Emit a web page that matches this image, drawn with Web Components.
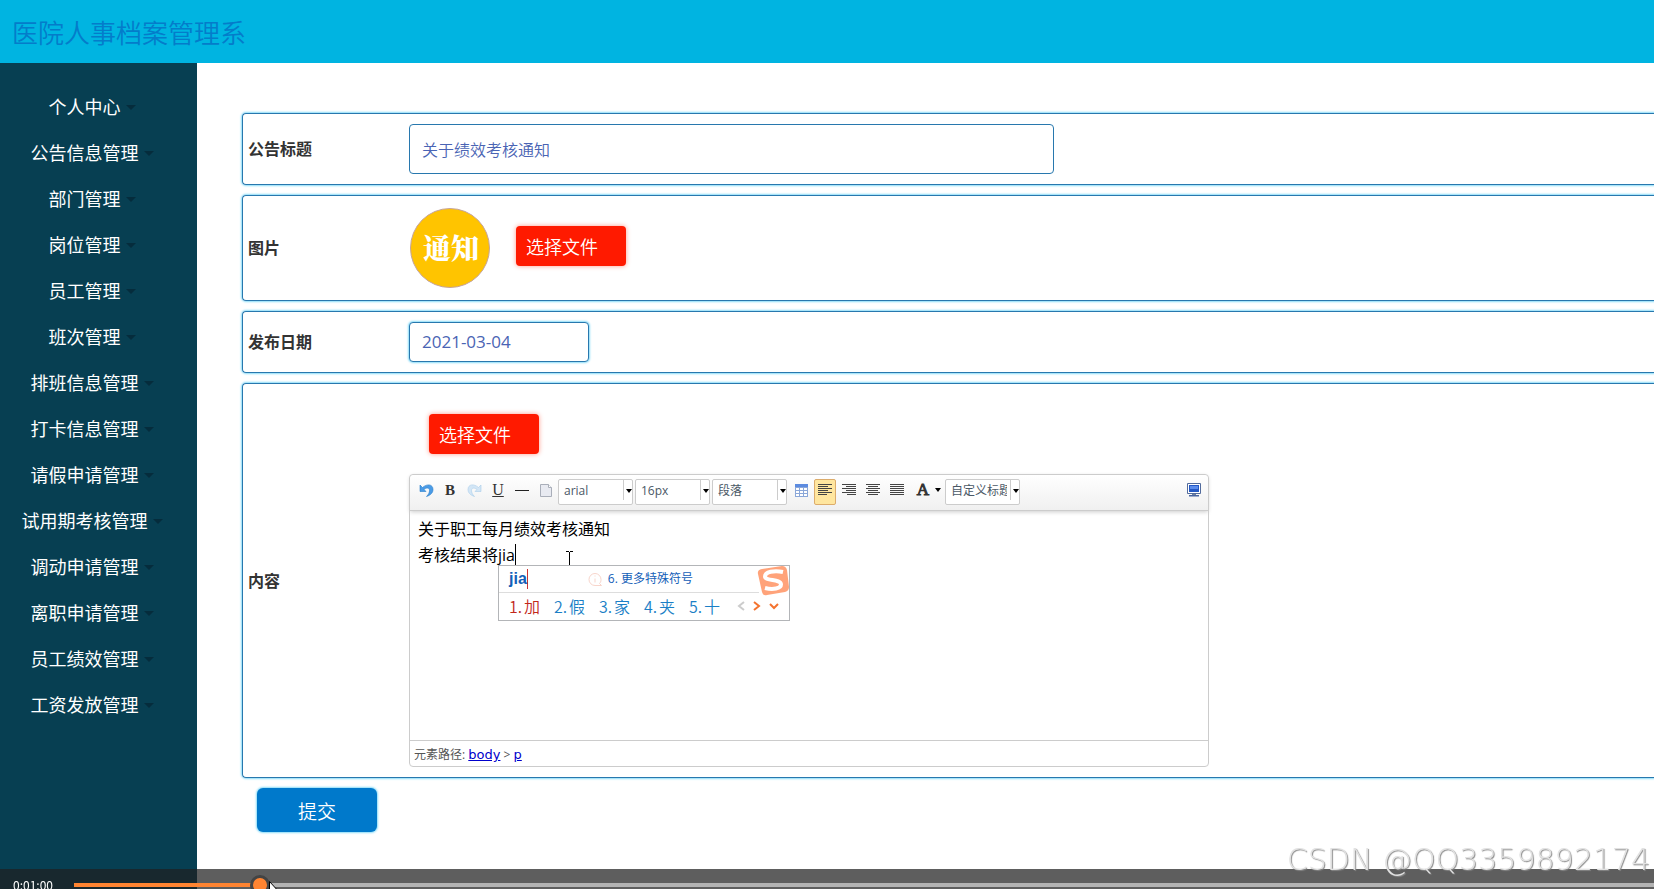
<!DOCTYPE html>
<html lang="zh-CN">
<head>
<meta charset="utf-8">
<title>医院人事档案管理系统</title>
<style>
html,body{margin:0;background:#fff;color:#333;font:16px/24px "Open Sans","Noto Sans CJK SC",sans-serif}
body{overflow:hidden}
</style>
</head>
<body>
<hr-app></hr-app>
<script>
function define(name, html, setup) {
  const template = document.createElement('template');
  template.innerHTML = html;
  customElements.define(name, class extends HTMLElement {
    constructor() {
      super();
      this.attachShadow({mode: 'open'}).append(template.content.cloneNode(true));
    }
    connectedCallback() { if (setup) setup(this, this.shadowRoot); }
  });
}

define('app-header', `
<style>
:host{display:flex;align-items:center;height:63px;padding:0 12px;background:#00b4e1}
h1{margin:0;font:350 26px/40px "Noto Sans CJK SC",sans-serif;color:#047cca}
</style>
<h1><slot></slot></h1>`);

define('menu-item', `
<style>
:host{display:block}
button{display:flex;align-items:center;justify-content:center;gap:5px;width:100%;height:46px;padding:0;border:0;background:none;color:#fff;font:inherit;font-size:18px;cursor:pointer}
i{border:5px solid transparent;border-top-color:#052c3c;border-bottom:0}
</style>
<button type="button"><span><slot></slot></span><i></i></button>`);

define('side-menu', `
<style>
:host{display:block;flex:none;box-sizing:border-box;width:197px;padding:21px 13px 21px 0;background:#073f52}
nav{display:flex;flex-direction:column}
</style>
<nav>
<menu-item>个人中心</menu-item><menu-item>公告信息管理</menu-item><menu-item>部门管理</menu-item>
<menu-item>岗位管理</menu-item><menu-item>员工管理</menu-item><menu-item>班次管理</menu-item>
<menu-item>排班信息管理</menu-item><menu-item>打卡信息管理</menu-item><menu-item>请假申请管理</menu-item>
<menu-item>试用期考核管理</menu-item><menu-item>调动申请管理</menu-item><menu-item>离职申请管理</menu-item>
<menu-item>员工绩效管理</menu-item><menu-item>工资发放管理</menu-item>
</nav>`);

define('form-row', `
<style>
:host{display:flex;align-items:center;padding:10px 0 10px 5px;border:1px solid #2878ae;border-right:0;border-radius:4px 0 0 4px;box-shadow:0 0 2px 1px #8adcf8}
.name{flex:none;width:161px;font-weight:bold;color:#333}
.field{flex:1;min-width:0}
</style>
<div class="name"><slot name="name"></slot></div>
<div class="field"><slot></slot></div>`);

define('text-field', `
<style>
:host{display:block}
input{display:block;box-sizing:border-box;width:100%;height:50px;padding:0 12px;border:1px solid #2878ae;border-radius:4px;background:#fff;color:#4a64b4;font:350 16px "Noto Sans CJK SC",sans-serif;outline:0}
:host([compact]) input{height:40px;padding-bottom:2px;font:17px "Open Sans",sans-serif;box-shadow:0 0 2px 1px #8adcf8}
</style>
<input type="text">`, (host, root) => {
  const input = root.querySelector('input');
  input.value = host.getAttribute('value');
  input.setAttribute('aria-label', host.getAttribute('label'));
});

define('file-button', `
<style>
:host{display:block}
button{display:block;width:110px;height:40px;padding:0 10px;border:0;border-radius:4px;background:#ff1a00;box-shadow:0 0 5px #ff9a8c;color:#fff;font:350 18px/24px "Noto Sans CJK SC",sans-serif;text-align:left;cursor:pointer}
</style>
<button type="button">选择文件</button>`);

define('notice-picture', `
<style>:host{display:block;width:80px;height:80px}svg{display:block}text{font:900 28px "Noto Serif CJK SC","Noto Sans CJK SC",serif}</style>
<svg width="80" height="80" viewBox="0 0 80 80"><circle cx="40" cy="40" r="39.5" fill="#ffc400" stroke="#c5a49c"/><text x="41" y="51" text-anchor="middle" fill="#fff">通知</text></svg>`);

define('combo-box', `
<style>
:host{display:block;position:relative;width:75px;height:26px}
select{appearance:none;display:block;box-sizing:border-box;width:100%;height:100%;padding:0 12px 3px 5px;border:1px solid #ccc;border-radius:2px;background:linear-gradient(#ccc,#ccc) 64px 0/1px 20px no-repeat #fff;color:#4a5866;font:12px "Open Sans","Noto Sans CJK SC",sans-serif;text-overflow:clip;overflow:hidden}
i{position:absolute;right:1px;top:10px;border:3px solid transparent;border-top:4px solid #000;border-bottom:0;pointer-events:none}
</style>
<select><option></option></select><i></i>`, (host, root) => {
  root.querySelector('option').textContent = host.getAttribute('value');
  root.querySelector('select').setAttribute('aria-label', host.getAttribute('label'));
});

const lines = (rows) => '<path d="' + rows.map(([a, b], n) => `M${a} ${1.5 + n * 2}H${b}`).join('') + '" stroke="#444" fill="none"/>';
const ICONS = {
  undo: '<path d="M1 2v6.500h6L5 6.500C7.500 4.500 10.500 4.500 10.500 7.500c0 2-1 4-3 6C12 12 14 9.500 14 6.500 14 1 8 .500 3.500 4.500Z" fill="#4a9be6" stroke="#277cc9" stroke-width=".6"/>',
  redo: '<path d="M14 2v6.500H8L10 6.500C7.500 4.500 4.500 4.500 4.500 7.500c0 2 1 4 3 6C3 12 1 9.500 1 6.500 1 1 7 .500 11.500 4.500Z" fill="#d3e6f6" stroke="#a9cdea" stroke-width=".6"/>',
  line: '<path d="M0 7.500h14" stroke="#222"/>',
  page: '<path d="M1.500 1.500h8l3 3v9h-11Z" fill="#e8eaf1" stroke="#a9aeb9"/><path d="M9.500 1.500v3h3" fill="#fff" stroke="#a9aeb9"/>',
  table: '<path d="M1 2h13v12H1z" fill="#8ba7d8"/><path d="M1 1h13v3H1z" fill="#5c8be0"/><path d="M2 5h3v2H2zm4 0h3v2H6zm4 0h3v2h-3zM2 8h3v2H2zm4 0h3v2H6zm4 0h3v2h-3zM2 11h3v2H2zm4 0h3v2H6zm4 0h3v2h-3z" fill="#fff"/>',
  left: lines([[0, 14], [0, 10], [0, 14], [0, 10], [0, 14], [0, 9]]),
  right: lines([[0, 14], [4, 14], [0, 14], [4, 14], [0, 14], [5, 14]]),
  center: lines([[0, 14], [2, 12], [0, 14], [2, 12], [0, 14], [2, 12]]),
  justify: lines([[0, 14], [0, 14], [0, 14], [0, 14], [0, 14], [0, 14]]),
  screen: '<path d="M1.500.500h13v10H1.500z" fill="#fff" stroke="#526b9c"/><path d="M3 2h10v7H3z" fill="#2458c4"/><path d="M4 3h8v3H4z" fill="#5b8cec"/><path d="M6 11h4v1H6z" fill="#6d7fa2"/><path d="M3 12h10v1.500H3z" fill="#4865a0"/>'
};

define('tool-button', `
<style>
:host{display:block}
button{display:flex;align-items:center;justify-content:center;gap:6px;box-sizing:border-box;width:24px;height:26px;padding:0 0 4px;border:0;background:none;color:#333;font:bold 15px/20px "Liberation Serif",serif;cursor:pointer}
:host([active]) button{width:22px;margin:0 1px;border:1px solid #dcac6c;background:#ffe69f;border-radius:2px}
:host([wide]) button{width:32px;font-size:17px;font-weight:normal;-webkit-text-stroke:1px #333}
:host([underline]) button{text-decoration:underline;font-weight:normal;font-size:16px}
i{display:none;border:3px solid transparent;border-top:4px solid #000;border-bottom:0}
:host([wide]) i{display:block}
svg{display:block}
</style>
<button type="button"><slot></slot><i></i></button>`, (host, root) => {
  const button = root.querySelector('button');
  button.setAttribute('aria-label', host.getAttribute('label'));
  const icon = ICONS[host.getAttribute('icon')];
  if (icon) button.innerHTML = '<svg width="15" height="15" viewBox="0 0 15 15">' + icon + '</svg>';
});

define('input-candidates', `
<style>
:host{display:block;box-sizing:border-box;width:292px;border:1px solid #b3b5b8;background:#fff;color:#1b7fc6}
.top{display:flex;align-items:center;height:26px;padding-left:10px;border-bottom:1px solid #ddd;margin-right:30px}
b{font:bold 16px/20px "Liberation Sans",sans-serif;color:#1460b8;border-right:1px solid #c33}
.more{display:flex;align-items:center;gap:5px;margin-left:60px;font-size:12px;line-height:18px;color:#1460b8;white-space:nowrap}
.list{display:flex;align-items:center;height:27px;padding:0 0 2px 10px;box-sizing:border-box}
.list span{display:flex;gap:2px;width:45px;font:350 16px/24px "Noto Sans CJK SC",sans-serif}
.list span:first-child{color:#c22719}
em{font-style:normal}
svg{display:block;flex:none}
.logo{position:absolute;right:0;top:-1px}
</style>
<div class="top"><b>jia</b><div class="more"><svg width="15" height="15" viewBox="0 0 15 15" fill="none" stroke="#f8d5cb"><path d="M13.500 13.500H7a6 6 0 1 1 6-6c0 2-.5 3-1.500 4ZM7 6.500v4M7 3.500v1"/></svg><span>6. 更多特殊符号</span></div></div>
<div class="list"><span>1.<em>加</em></span><span>2.<em>假</em></span><span>3.<em>家</em></span><span>4.<em>夹</em></span><span>5.<em>十</em></span>
<svg width="46" height="12" viewBox="0 0 46 12" fill="none" stroke-width="2"><path d="M10 2 5 6l5 4" stroke="#ccc"/><path d="m20 2 5 4-5 4" stroke="#f4732f"/><path d="m36 4 4 4 4-4" stroke="#f4732f"/></svg></div>
<svg class="logo" width="32" height="32" viewBox="0 0 32 32"><path d="M5 4 25 1q4 0 5 4l2 17q0 4-4 5L10 30q-4 1-5-3L1 9q-1-4 4-5Z" fill="#ffa37a"/><path d="M26 7C17 5 8 7 8 11.500c0 5 16 2 16 8 0 4-8 5.500-16 3.500" fill="none" stroke="#fff" stroke-width="4"/></svg>`);

define('rich-editor', `
<style>
:host{display:flex;flex-direction:column;position:relative;box-sizing:border-box;width:100%;max-width:800px;height:293px;border:1px solid #ccc;border-radius:4px;background:#fff}
.bar{display:flex;flex:none;box-sizing:border-box;height:36px;padding:4px 3px 0 4px;border-bottom:1px solid #ccc;border-radius:4px 4px 0 0;background:linear-gradient(#fff,#f0f0f0);box-shadow:0 1px 4px #ccc}
.combos{display:flex;gap:2px;margin-right:2px}
.aligns{display:flex;margin-right:4px}
.fill{flex:1}
.body{flex:1;padding:5px 8px;color:#000;font-family:"Open Sans","Noto Sans CJK SC",sans-serif;line-height:26px;outline:0}
.body p{margin:0}
.body p:last-child span{border-right:1px solid #000}
.path{flex:none;height:25px;padding:0 4px;border-top:1px solid #ccc;font-size:12px;line-height:27px;color:#555}
a{font:13px/20px "DejaVu Sans",sans-serif;color:#00c}
input-candidates{position:absolute;left:88px;top:90px}
.beam{position:absolute;left:155px;top:76px}
</style>
<div class="bar" role="toolbar" aria-label="编辑工具">
<tool-button icon="undo" label="撤销"></tool-button><tool-button label="加粗">B</tool-button><tool-button icon="redo" label="重做"></tool-button><tool-button underline label="下划线">U</tool-button><tool-button icon="line" label="分隔线"></tool-button><tool-button icon="page" label="清空文档"></tool-button>
<div class="combos"><combo-box value="arial" label="字体"></combo-box><combo-box value="16px" label="字号"></combo-box><combo-box value="段落" label="段落格式"></combo-box></div>
<tool-button icon="table" label="插入表格"></tool-button><div class="aligns"><tool-button active icon="left" label="居左对齐"></tool-button><tool-button icon="right" label="居右对齐"></tool-button><tool-button icon="center" label="居中对齐"></tool-button><tool-button icon="justify" label="两端对齐"></tool-button></div><tool-button wide label="字体颜色">A</tool-button>
<combo-box value="自定义标题" label="自定义标题"></combo-box><div class="fill"></div><tool-button icon="screen" label="全屏"></tool-button>
</div>
<div class="body" contenteditable="true" role="textbox" aria-label="内容"><p>关于职工每月绩效考核通知</p><p><span>考核结果将jia</span></p></div>
<div class="path">元素路径: <a href="#body">body</a> &gt; <a href="#p">p</a></div>
<svg class="beam" width="9" height="17" viewBox="0 0 9 17" fill="none" stroke="#000"><path d="M1 .500h3M5 .500h3M1 16.500h3M5 16.500h3M4.500 1v15"/></svg>
<input-candidates></input-candidates>`);

define('notice-form', `
<style>
:host{display:block;flex:1;min-width:0;padding:50px 0 56px 45px}
form{display:flex;flex-direction:column;gap:10px}
.wide{width:100%;max-width:645px}
.date{width:180px}
.picture{display:flex;align-items:center;gap:26px;padding:2px 0 2px 1px}
.picture file-button{margin-bottom:4px}
.content{display:flex;flex-direction:column;gap:20px;padding-top:20px}
.content file-button{margin-left:20px}
.submit{width:120px;height:44px;margin-left:15px;border:0;border-radius:6px;background:#0079cb;box-shadow:0 0 2px 1px #8adcf8;color:#fff;font:350 19px "Noto Sans CJK SC",sans-serif;cursor:pointer}
</style>
<form>
<form-row><span slot="name">公告标题</span><text-field class="wide" label="公告标题" value="关于绩效考核通知"></text-field></form-row>
<form-row><span slot="name">图片</span><div class="picture"><notice-picture></notice-picture><file-button></file-button></div></form-row>
<form-row><span slot="name">发布日期</span><text-field class="date" compact label="发布日期" value="2021-03-04"></text-field></form-row>
<form-row><span slot="name">内容</span><div class="content"><file-button></file-button><rich-editor></rich-editor></div></form-row>
<button class="submit" type="button">提交</button>
</form>`);

define('video-bar', `
<style>
:host{display:block;position:fixed;left:0;right:0;bottom:0;height:20px;overflow:hidden;background:rgba(32,32,32,.72)}
.row{display:flex;align-items:center;height:32px;padding-left:13px;color:#fff}
time{flex:none;width:61px;font:12px/16px "Noto Sans CJK SC",sans-serif}
input{appearance:none;flex:1;min-width:0;height:20px;margin:0;background:linear-gradient(90deg,#ff8431 12%,#b3b3b3 12%) 0 8px/100% 4px no-repeat;outline:0}
input::-webkit-slider-thumb{appearance:none;box-sizing:border-box;width:20px;height:20px;border:3px solid #444;border-radius:50%;background:#ff8431}
svg{position:absolute;left:269px;top:12px}
</style>
<div class="row"><time>0:01:00</time><input type="range" min="0" max="1000" value="113" aria-label="播放进度"></div>
<svg width="12" height="18" viewBox="0 0 12 18"><path d="M.500.500v15l3.500-3 2 5 2-1-2-4.500h5Z" fill="#fff" stroke="#000"/></svg>`);

define('water-mark', `
<style>
:host{display:block;position:fixed;right:4px;bottom:11px;font:30px/36px "DejaVu Sans Light","DejaVu Sans",sans-serif;font-weight:200;color:#e2e2e2;text-shadow:1px 1px 1px #888;white-space:nowrap}
</style><slot></slot>`);

define('hr-app', `
<style>
:host{display:flex;flex-direction:column;min-height:100vh}
.page{display:flex;flex:1}
</style>
<app-header>医院人事档案管理系</app-header>
<div class="page"><side-menu></side-menu><notice-form></notice-form></div>
<video-bar></video-bar>
<water-mark>CSDN @QQ3359892174</water-mark>`);
</script>
</body>
</html>
